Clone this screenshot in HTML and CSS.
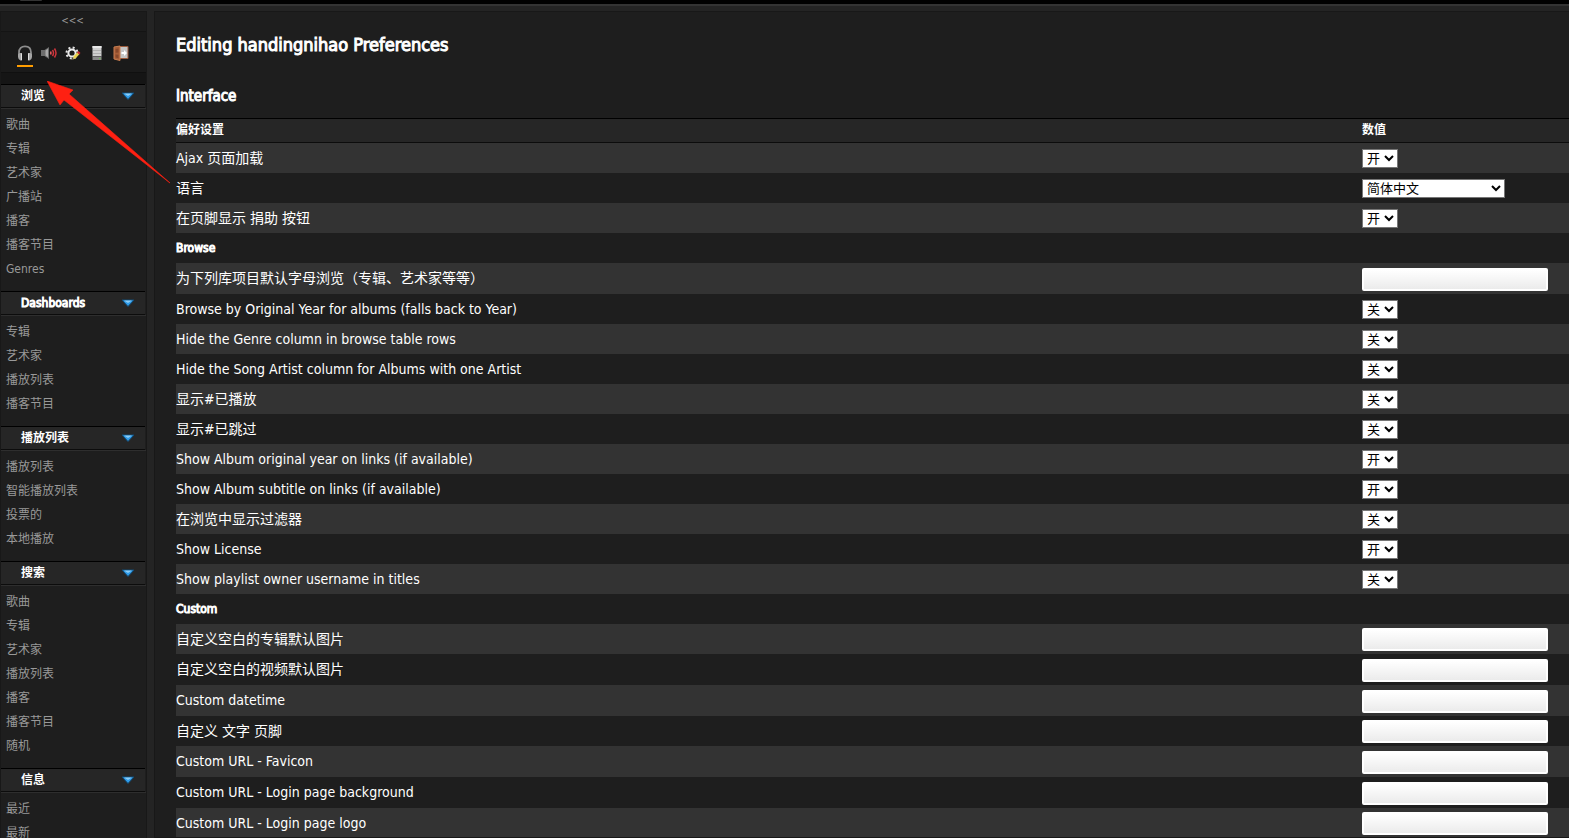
FILE: index.html
```
<!DOCTYPE html>
<html lang="zh-CN">
<head>
    <meta charset="UTF-8">
    <meta name="viewport" content="width=device-width, initial-scale=1.0">
    <title>Preferences</title>
    <link rel="stylesheet" href="styles.css">
</head>
<body>
<header class="topbar"><span class="logo-edge"></span></header>
<div class="page">
    <aside class="sidebar">
        <button class="collapse" type="button">&lt;&lt;&lt;</button>
        <nav class="tabs">
            <a href="#" class="tab active" aria-label="Home">
                <svg width="16" height="16" viewBox="0 0 16 16">
                    <path d="M2 10V7.500C2 3.500 4.500 1.300 8 1.300S14 3.500 14 7.500V10" fill="none" stroke="#8d8d8d" stroke-width="1.800"/>
                    <path d="M1 9.500q.5-1.500 2-1.500H5v7.500H3.500Q1 14.500 1 12zM15 9.500q-.5-1.500-2-1.500h-2v7.500h1.500Q15 14.500 15 12z" fill="#a5a5a5"/>
                    <path d="M4.500 8.500v6.500M11.500 8.500v6.500" stroke="#dedede"/>
                </svg>
            </a>
            <a href="#" class="tab" aria-label="Localplay">
                <svg width="16" height="16" viewBox="0 0 16 16">
                    <path d="M0 5h3.500L8 2v12l-4.500-3H0z" fill="#6c6c6c"/>
                    <path d="M4.500 5.500L7 3.800v8.400l-2.500-1.700z" fill="#a9a9a9"/>
                    <path d="M9.500 6.500q1 1.500 0 3" fill="none" stroke="#ef5a5f" stroke-width="1.500"/>
                    <path d="M11.500 5q2 3 0 6M13.500 3.500q3 4.500 0 9" fill="none" stroke="#d0353c" stroke-width="1.500"/>
                </svg>
            </a>
            <a href="#" class="tab" aria-label="Preferences">
                <svg width="16" height="16" viewBox="0 0 16 16">
                    <circle cx="7" cy="8" r="3.600" fill="none" stroke="#ececec" stroke-width="2"/>
                    <circle cx="7" cy="8" r="5.500" fill="none" stroke="#e4e4e4" stroke-width="2" stroke-dasharray="2 2.320"/>
                    <path d="M7.500 14.500l1-3L12.500 7l2 2-4 4.500z" fill="#e9d34c"/>
                    <path d="M12 7.500L13.500 6l2 2L14 9.500z" fill="#c72c35"/>
                    <path d="M7.500 14.500l.7-2.200 1.500 1.500z" fill="#bcae80"/>
                </svg>
            </a>
            <a href="#" class="tab" aria-label="Server">
                <svg width="16" height="16" viewBox="0 0 16 16">
                    <path d="M3.500 1h9v10h-9z" fill="#cfcfcf"/>
                    <path d="M3.500 1h9v2h-9z" fill="#e9e9e9"/>
                    <path d="M4 5.500h8M4 8.500h8" stroke="#b0b0b0"/>
                    <path d="M3.500 11h9v4h-9z" fill="#8a8a8a"/>
                    <path d="M4 11.500h8" stroke="#5e5e5e"/>
                    <path d="M10 13h1.500v1H10z" fill="#6cc24a"/>
                </svg>
            </a>
            <a href="#" class="tab" aria-label="Logout">
                <svg width="16" height="16" viewBox="0 0 16 16">
                    <path d="M6 1.500h9v12H6z" fill="#c4c4c4" stroke="#9b5b3c"/>
                    <path d="M1 2l6-1v14.500L1 14z" fill="#a85f38" stroke="#c77d50"/>
                    <path d="M2.500 4l3-.5v4l-3 .3zM2.500 9.500l3 .2v3.500l-3-.7z" fill="#87482b"/>
                    <path d="M8.500 7h2.500V5l3 3-3 3V9H8.500z" fill="#fff"/>
                </svg>
            </a>
        </nav>
        <div class="spacer"></div>

        <section class="menu">
            <h4><button type="button">浏览 <svg width="14" height="8" viewBox="0 0 14 8"><path class="caret" d="M1 1h12L7 7.500z"/><path class="caret-shine" d="M3 1.500h8L7 4z"/></svg></button></h4>
            <ul>
                <li><a href="#">歌曲</a></li>
                <li><a href="#">专辑</a></li>
                <li><a href="#">艺术家</a></li>
                <li><a href="#">广播站</a></li>
                <li><a href="#">播客</a></li>
                <li><a href="#">播客节目</a></li>
                <li><a href="#">Genres</a></li>
            </ul>
        </section>
        <section class="menu">
            <h4><button type="button" class="heavy">Dashboards <svg width="14" height="8" viewBox="0 0 14 8"><path class="caret" d="M1 1h12L7 7.500z"/><path class="caret-shine" d="M3 1.500h8L7 4z"/></svg></button></h4>
            <ul>
                <li><a href="#">专辑</a></li>
                <li><a href="#">艺术家</a></li>
                <li><a href="#">播放列表</a></li>
                <li><a href="#">播客节目</a></li>
            </ul>
        </section>
        <section class="menu">
            <h4><button type="button">播放列表 <svg width="14" height="8" viewBox="0 0 14 8"><path class="caret" d="M1 1h12L7 7.500z"/><path class="caret-shine" d="M3 1.500h8L7 4z"/></svg></button></h4>
            <ul>
                <li><a href="#">播放列表</a></li>
                <li><a href="#">智能播放列表</a></li>
                <li><a href="#">投票的</a></li>
                <li><a href="#">本地播放</a></li>
            </ul>
        </section>
        <section class="menu">
            <h4><button type="button">搜索 <svg width="14" height="8" viewBox="0 0 14 8"><path class="caret" d="M1 1h12L7 7.500z"/><path class="caret-shine" d="M3 1.500h8L7 4z"/></svg></button></h4>
            <ul>
                <li><a href="#">歌曲</a></li>
                <li><a href="#">专辑</a></li>
                <li><a href="#">艺术家</a></li>
                <li><a href="#">播放列表</a></li>
                <li><a href="#">播客</a></li>
                <li><a href="#">播客节目</a></li>
                <li><a href="#">随机</a></li>
            </ul>
        </section>
        <section class="menu">
            <h4><button type="button">信息 <svg width="14" height="8" viewBox="0 0 14 8"><path class="caret" d="M1 1h12L7 7.500z"/><path class="caret-shine" d="M3 1.500h8L7 4z"/></svg></button></h4>
            <ul>
                <li><a href="#">最近</a></li>
                <li><a href="#">最新</a></li>
            </ul>
        </section>
    </aside>

    <main class="content">
        <h1 class="heavy">Editing handingnihao Preferences</h1>
        <h2 class="heavy">Interface</h2>
        <table class="prefs">
            <thead>
                <tr><th class="name">偏好设置</th><th class="value">数值</th></tr>
            </thead>
            <tbody>
                <tr><td><label for="ajax">Ajax 页面加载</label></td><td><select id="ajax"><option>开</option><option>关</option></select></td></tr>
                <tr><td><label for="lang">语言</label></td><td><select id="lang" class="wide"><option>简体中文</option></select></td></tr>
                <tr><td><label for="donate">在页脚显示 捐助 按钮</label></td><td><select id="donate"><option>开</option><option>关</option></select></td></tr>
            </tbody>
            <tbody>
                <tr><th colspan="2" class="heavy">Browse</th></tr>
                <tr class="text"><td><label for="alpha">为下列库项目默认字母浏览（专辑、艺术家等等）</label></td><td><input type="text" id="alpha"></td></tr>
                <tr><td><label for="origYear">Browse by Original Year for albums (falls back to Year)</label></td><td><select id="origYear"><option>关</option><option>开</option></select></td></tr>
                <tr><td><label for="hideGenre">Hide the Genre column in browse table rows</label></td><td><select id="hideGenre"><option>关</option><option>开</option></select></td></tr>
                <tr><td><label for="hideArtist">Hide the Song Artist column for Albums with one Artist</label></td><td><select id="hideArtist"><option>关</option><option>开</option></select></td></tr>
                <tr><td><label for="played">显示#已播放</label></td><td><select id="played"><option>关</option><option>开</option></select></td></tr>
                <tr><td><label for="skipped">显示#已跳过</label></td><td><select id="skipped"><option>关</option><option>开</option></select></td></tr>
                <tr><td><label for="albumYear">Show Album original year on links (if available)</label></td><td><select id="albumYear"><option>开</option><option>关</option></select></td></tr>
                <tr><td><label for="subtitle">Show Album subtitle on links (if available)</label></td><td><select id="subtitle"><option>开</option><option>关</option></select></td></tr>
                <tr><td><label for="filter">在浏览中显示过滤器</label></td><td><select id="filter"><option>关</option><option>开</option></select></td></tr>
                <tr><td><label for="license">Show License</label></td><td><select id="license"><option>开</option><option>关</option></select></td></tr>
                <tr><td><label for="owner">Show playlist owner username in titles</label></td><td><select id="owner"><option>关</option><option>开</option></select></td></tr>
            </tbody>
            <tbody class="custom">
                <tr><th colspan="2" class="heavy">Custom</th></tr>
                <tr class="text"><td><label for="blankAlbum">自定义空白的专辑默认图片</label></td><td><input type="text" id="blankAlbum"></td></tr>
                <tr class="text"><td><label for="blankVideo">自定义空白的视频默认图片</label></td><td><input type="text" id="blankVideo"></td></tr>
                <tr class="text"><td><label for="datetime">Custom datetime</label></td><td><input type="text" id="datetime"></td></tr>
                <tr class="text"><td><label for="footer">自定义 文字 页脚</label></td><td><input type="text" id="footer"></td></tr>
                <tr class="text"><td><label for="favicon">Custom URL - Favicon</label></td><td><input type="text" id="favicon"></td></tr>
                <tr class="text"><td><label for="loginBg">Custom URL - Login page background</label></td><td><input type="text" id="loginBg"></td></tr>
                <tr class="text"><td><label for="loginLogo">Custom URL - Login page logo</label></td><td><input type="text" id="loginLogo"></td></tr>
            </tbody>
        </table>
    </main>
</div>

<svg class="arrow" width="124" height="104" viewBox="0 0 124 104">
    <path d="M0 0L26 9L22 13L123 102L17 19L13 24Z" fill="#fe2012" stroke="#fe2012" stroke-width=".6"/>
</svg>
</body>
</html>
```

FILE: styles.css
```
* {
    box-sizing: border-box;
}

body {
    margin: 0;
    height: 100vh;
    overflow: hidden;
    display: flex;
    flex-direction: column;
    background-color: #242424;
    color: #ffffff;
    font-family: "DejaVu Sans Condensed", "Noto Sans CJK SC", sans-serif;
    font-size: 14px;
}

/* bold look on the regular condensed face */
.heavy {
    font-weight: normal !important;
    -webkit-text-stroke: 1px currentColor;
}

.topbar {
    flex: none;
    height: 6px;
    background-color: #000;
    border-bottom: 2px solid #333;
    padding-left: 20px;
}

/* bottom edge of the round logo */
.logo-edge {
    display: block;
    width: 22px;
    height: 1px;
    background-color: #333;
    border-radius: 0 0 11px 11px;
}

.page {
    flex: 1;
    min-height: 0;
    display: flex;
    gap: 7px;
    padding-top: 5px;
}

/* Sidebar */
.sidebar {
    flex: none;
    width: 147px;
    overflow: hidden;
    background-color: #1e1e1e;
    border: 1px solid #181818;
    border-bottom: none;
}

.collapse {
    display: block;
    width: 100%;
    height: 19px;
    padding: 0 2px 2px 0;
    border: none;
    background-color: #1c1c1c;
    color: #999;
    font: inherit;
    font-size: 10px;
    cursor: pointer;
}

.tabs {
    display: flex;
    gap: 8px;
    height: 41px;
    padding: 13px 16px 0;
    background-color: #1a1a1a;
    border-top: 1px solid #141414;
}

.tab {
    height: 22px;
    width: 16px;
}

.tab svg {
    display: block;
}

.tab.active {
    border-bottom: 2px solid #ff9d00;
}

.spacer {
    height: 12px;
    background-color: #151515;
    border-top: 1px solid #101010;
}

.menu h4 {
    margin: 0 1px 0 0;
    height: 24px;
    background-color: #262626;
    border-top: 1px solid #000;
    border-bottom: 1px solid #0c0c0c;
}

.menu button {
    display: flex;
    justify-content: space-between;
    align-items: center;
    width: 100%;
    height: 22px;
    padding: 0 10px 0 20px;
    border: none;
    background: none;
    color: #fff;
    font: inherit;
    font-size: 12px;
    line-height: 14px;
    cursor: pointer;
}

.caret {
    fill: #2f9be8;
    stroke: #134a72;
}

.caret-shine {
    fill: #8ccdf7;
}

.menu ul {
    list-style: none;
    margin: 0;
    padding: 4px 0 10px 5px;
    border-top: 1px solid #2e2e2e;
}

.menu li {
    height: 24px;
    line-height: 24px;
    font-size: 12px;
}

.menu a {
    color: #999;
    text-decoration: none;
}

/* Preferences */
.content {
    flex: 1;
    min-width: 0;
    overflow: hidden;
    padding: 20px 0 0 21px;
    background-color: #1e1e1e;
    border: 1px solid #181818;
    border-right: none;
}

h1 {
    margin: 0 0 28px;
    font-size: 18px;
    line-height: 26px;
}

h2 {
    margin: 0 0 12px;
    font-size: 15px;
    line-height: 20px;
}

.prefs {
    width: 100%;
    table-layout: fixed;
    border-collapse: collapse;
}

.prefs th {
    padding: 0;
    text-align: left;
    font-size: 12px;
    line-height: 14px;
}

.prefs td {
    padding: 0;
}

.prefs .value {
    width: 207px;
}

.prefs thead tr {
    height: 24px;
    background-color: #262626;
    border-top: 1px solid #000;
    border-bottom: 1px solid #0c0c0c;
}

.prefs thead th {
    padding-bottom: 2px;
}

.prefs tbody tr {
    height: 30px;
}

.prefs tbody tr.text {
    height: 31px;
}

.prefs .custom tr.text:nth-child(3n+2) {
    height: 30px;
}

.prefs tbody tr:nth-child(odd) {
    background-color: #333;
}

.prefs tbody:not(:nth-of-type(1)) tr:nth-child(odd) {
    background-color: #1e1e1e;
}

.prefs tbody:not(:nth-of-type(1)) tr:nth-child(even) {
    background-color: #333;
}

.prefs label,
.prefs select,
.prefs input {
    display: block;
}

.prefs label {
    line-height: 16px;
}

.prefs select,
.prefs input {
    margin: 2px 0 0;
}

.prefs select {
    height: 19px;
    padding: 0;
    border: 1px solid #767676;
    border-radius: 0;
    background-color: #fff;
    color: #000;
    font: inherit;
    font-size: 13px;
}

.prefs select.wide {
    width: 143px;
}

.prefs input {
    width: 186px;
    height: 23px;
    padding: 0 4px;
    border: 2px solid #fff;
    border-radius: 2px;
    background: linear-gradient(#fff, #ebebeb);
    font: inherit;
}

/* pointer laid over the page */
.arrow {
    position: absolute;
    left: 47px;
    top: 81px;
    pointer-events: none;
}
```
